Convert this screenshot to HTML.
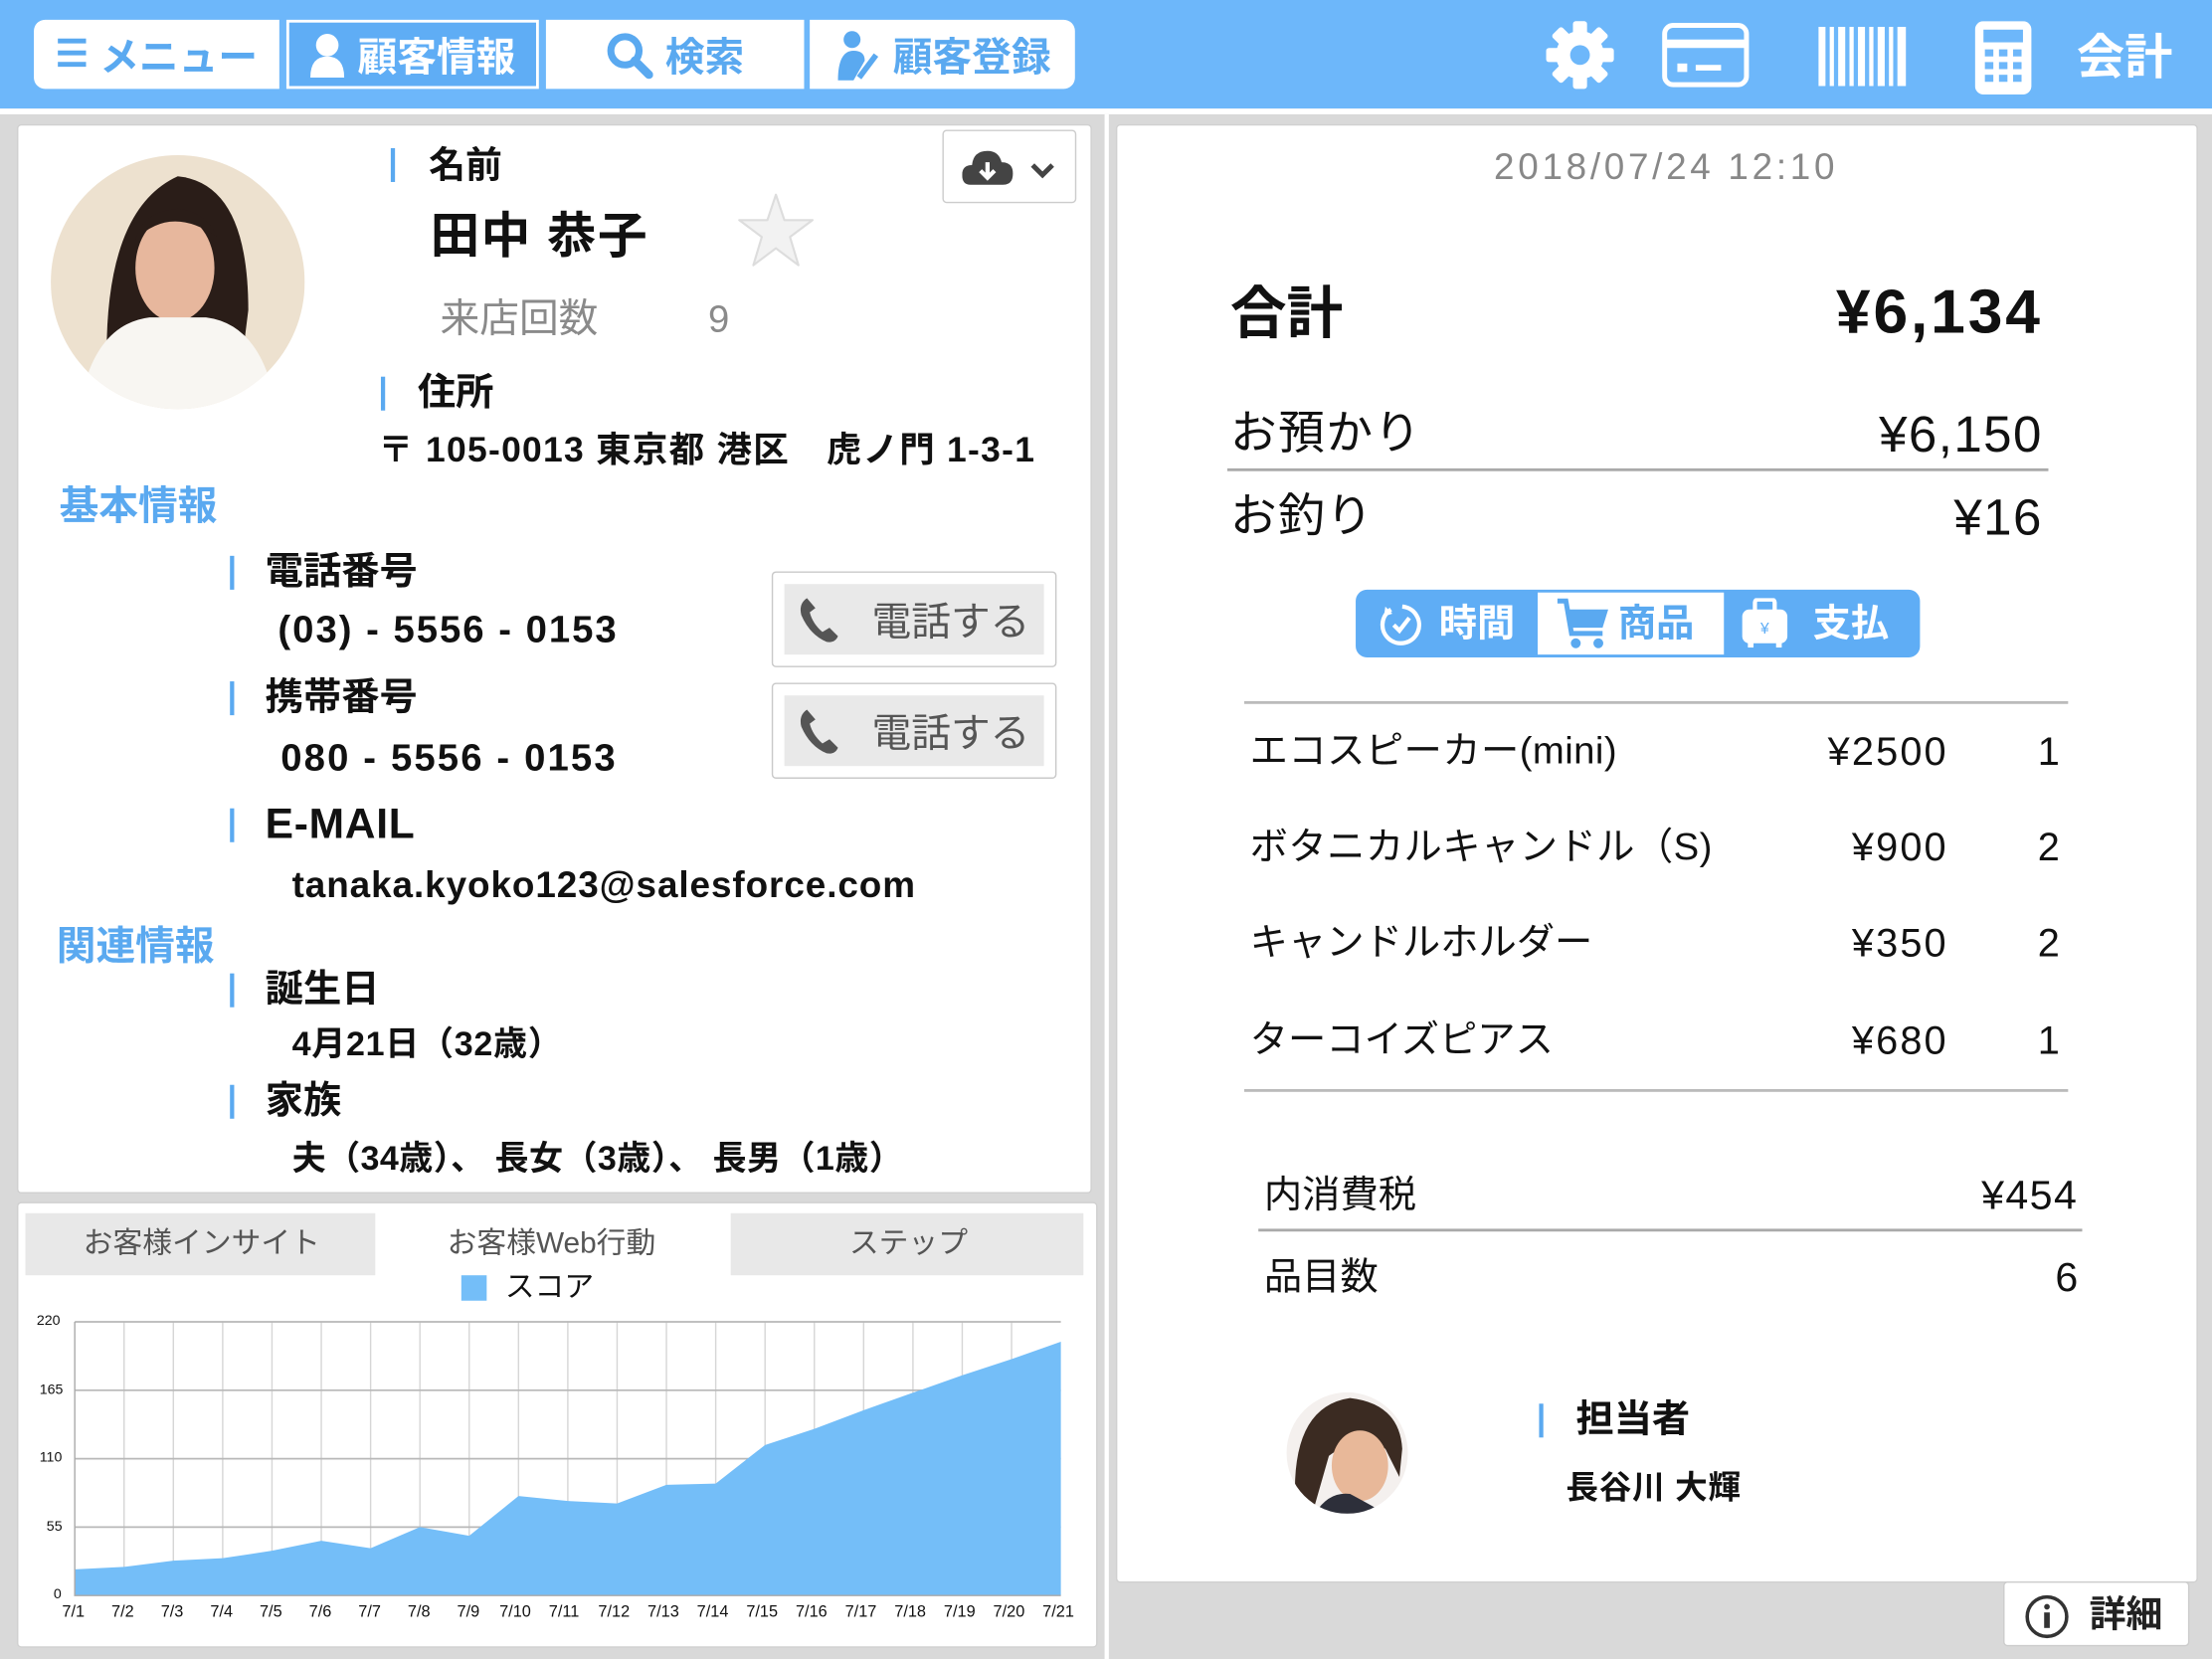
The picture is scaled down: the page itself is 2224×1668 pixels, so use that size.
<!DOCTYPE html>
<html><head><meta charset="utf-8">
<style>
*{margin:0;padding:0;box-sizing:border-box}
html,body{width:2224px;height:1668px;overflow:hidden;background:#d9d9d9}
#w{position:absolute;left:0;top:0;width:1568px;height:1176px;transform:scale(1.41837);transform-origin:0 0;font-family:"Liberation Sans","Noto Sans CJK JP",sans-serif;color:#111}
.a{position:absolute}
.t{position:absolute;line-height:1;white-space:nowrap}
.b{font-weight:bold}
.bar{position:absolute;width:3px;background:#5aa9f0}
.nav{position:absolute;top:14px;height:49px;background:#fff;color:#5aa9f0;font-weight:bold;font-size:28px;display:flex;align-items:center;justify-content:center;gap:8px}
.btn{position:absolute;left:547px;width:202px;height:68px;border:1px solid #c9c9c9;border-radius:3px;background:#fff}
.btn div{position:absolute;left:8px;top:8px;right:8px;bottom:8px;background:#e9e9e9;color:#555;font-size:28px;display:flex;align-items:center;justify-content:center;gap:22px}
.r{position:absolute;text-align:right;line-height:1;white-space:nowrap}
</style></head><body><div id="w">
<div class="a" style="left:0;top:0;width:1568px;height:77px;background:#6db7fa"></div>
<div class="a" style="left:0;top:77px;width:1568px;height:4px;background:#fff"></div>
<div class="nav" style="left:24px;width:174px;border-radius:8px 0 0 8px"><span style="font-size:26px">☰</span>メニュー</div>
<div class="nav" style="left:203px;width:179px;background:#5fadf5;color:#fff;border:2px solid #fff">
<svg width="26" height="32" viewBox="0 0 26 32"><circle cx="13" cy="9" r="8" fill="#fff"/><path d="M1 32 Q1 17 13 17 Q25 17 25 32Z" fill="#fff"/></svg>顧客情報</div>
<div class="nav" style="left:387px;width:183px"><svg width="34" height="34" viewBox="0 0 34 34"><circle cx="14" cy="14" r="10" fill="none" stroke="#5aa9f0" stroke-width="5"/><path d="M21 21 L31 31" stroke="#5aa9f0" stroke-width="6" stroke-linecap="round"/></svg>検索</div>
<div class="nav" style="left:574px;width:188px;border-radius:0 8px 8px 0"><svg width="34" height="36" viewBox="0 0 34 36"><circle cx="13" cy="7" r="6" fill="#5aa9f0"/><path d="M3 36 Q3 15 14 15 Q22 15 22 22 L14 36Z" fill="#5aa9f0"/><path d="M18 34 L30 18" stroke="#5aa9f0" stroke-width="4"/></svg>顧客登録</div>
<svg class="a" style="left:1094px;top:13px" width="52" height="52" viewBox="0 0 52 52"><g fill="#fff"><circle cx="26" cy="26" r="17"/><g id="tt"><rect x="21" y="2" width="10" height="12" rx="2"/><rect x="21" y="38" width="10" height="12" rx="2"/></g><use href="#tt" transform="rotate(45 26 26)"/><use href="#tt" transform="rotate(90 26 26)"/><use href="#tt" transform="rotate(135 26 26)"/></g><circle cx="26" cy="26" r="7" fill="#6db7fa"/></svg>
<svg class="a" style="left:1178px;top:16px" width="62" height="46" viewBox="0 0 62 46"><rect x="2" y="2" width="58" height="42" rx="6" fill="none" stroke="#fff" stroke-width="3.5"/><rect x="2" y="12" width="58" height="6" fill="#fff"/><rect x="11" y="29" width="7" height="6" fill="#fff"/><rect x="24" y="30" width="18" height="4" fill="#fff"/></svg>
<svg class="a" style="left:1289px;top:19px" width="64" height="42" viewBox="0 0 64 42"><g fill="#fff"><rect x="0" width="5" height="42"/><rect x="8" width="3" height="42"/><rect x="14" width="5" height="42"/><rect x="22" width="3" height="42"/><rect x="28" width="5" height="42"/><rect x="36" width="3" height="42"/><rect x="42" width="5" height="42"/><rect x="50" width="3" height="42"/><rect x="56" width="6" height="42"/></g></svg>
<svg class="a" style="left:1400px;top:15px" width="40" height="52" viewBox="0 0 40 52"><rect x="0" y="0" width="40" height="52" rx="6" fill="#fff"/><rect x="6" y="6" width="28" height="9" fill="#6db7fa"/><g fill="#6db7fa"><rect x="7" y="20" width="6" height="5"/><rect x="17" y="20" width="6" height="5"/><rect x="27" y="20" width="6" height="5"/><rect x="7" y="29" width="6" height="5"/><rect x="17" y="29" width="6" height="5"/><rect x="27" y="29" width="6" height="5"/><rect x="7" y="38" width="6" height="5"/><rect x="17" y="38" width="6" height="5"/><rect x="27" y="38" width="6" height="5"/></g></svg>
<div class="t b" style="left:1472px;top:24px;font-size:34px;color:#fff">会計</div>

<div class="a" style="left:783px;top:81px;width:3px;height:1095px;background:#fff"></div>
<div class="a" style="left:12px;top:88px;width:762px;height:758px;background:#fff;border:1px solid #d0d0d0;border-radius:3px"></div>
<svg class="a" style="left:36px;top:110px" width="180" height="180" viewBox="0 0 180 180"><defs><clipPath id="c1"><circle cx="90" cy="90" r="90"/></clipPath></defs><g clip-path="url(#c1)"><rect width="180" height="180" fill="#ede1cf"/><path d="M40 160 Q35 40 90 15 Q140 20 140 110 L135 150 Z" fill="#2a1d18"/><ellipse cx="88" cy="80" rx="28" ry="38" fill="#e7b79d"/><path d="M20 180 Q30 120 70 115 L110 115 Q150 120 160 180Z" fill="#f8f6f2"/><path d="M60 60 Q85 35 118 58 Q110 40 90 38 Q65 40 60 60Z" fill="#2a1d18"/></g></svg>
<div class="bar" style="left:277px;top:105px;height:24px"></div>
<div class="t b" style="left:304px;top:104px;font-size:26px">名前</div>
<div class="t b" style="left:305px;top:150px;font-size:35px;letter-spacing:1px">田中 恭子</div>
<svg class="a" style="left:522px;top:136px" width="56" height="54" viewBox="0 0 56 54"><path d="M28 2 L34 20 L54 20 L38 32 L44 52 L28 40 L12 52 L18 32 L2 20 L22 20Z" fill="#f2f2f2" stroke="#ddd" stroke-width="1.5" stroke-linejoin="round"/></svg>
<div class="t" style="left:312px;top:212px;font-size:28px;color:#8a8a8a">来店回数</div>
<div class="t" style="left:502px;top:213px;font-size:27px;color:#8a8a8a">9</div>
<div class="a" style="left:668px;top:92px;width:95px;height:52px;border:1px solid #ccc;border-radius:3px;background:#fff"></div>
<svg class="a" style="left:682px;top:103px" width="74" height="30" viewBox="0 0 74 30"><path d="M6 28 Q0 28 0 21 Q0 14 7 14 Q8 4 18 4 Q26 4 28 12 Q36 12 36 20 Q36 28 29 28Z" fill="#444"/><path d="M18 12 L18 22 M13 18 L18 23 L23 18" stroke="#fff" stroke-width="3" fill="none"/><path d="M50 14 L57 21 L64 14" stroke="#444" stroke-width="3.5" fill="none"/></svg>
<div class="bar" style="left:270px;top:267px;height:24px"></div>
<div class="t b" style="left:296px;top:265px;font-size:27px">住所</div>
<div class="t b" style="left:268px;top:307px;font-size:25px;letter-spacing:0.9px">〒 105-0013 東京都 港区　虎ノ門 1-3-1</div>
<div class="t b" style="left:42px;top:345px;font-size:28px;color:#5aa9f0">基本情報</div>
<div class="bar" style="left:163px;top:394px;height:24px"></div>
<div class="t b" style="left:188px;top:392px;font-size:27px">電話番号</div>
<div class="t b" style="left:197px;top:433px;font-size:27px;letter-spacing:1.4px">(03) - 5556 - 0153</div>
<div class="bar" style="left:163px;top:483px;height:24px"></div>
<div class="t b" style="left:188px;top:481px;font-size:27px">携帯番号</div>
<div class="t b" style="left:199px;top:524px;font-size:27px;letter-spacing:1.5px">080 - 5556 - 0153</div>
<div class="btn" style="top:405px"><div><svg width="30" height="34" viewBox="0 0 30 34"><path d="M6 2 Q0 6 2 14 Q8 28 20 33 Q26 34 28 29 L22 23 L17 26 Q10 20 8 12 L12 9 Z" fill="#555"/></svg>電話する</div></div>
<div class="btn" style="top:484px"><div><svg width="30" height="34" viewBox="0 0 30 34"><path d="M6 2 Q0 6 2 14 Q8 28 20 33 Q26 34 28 29 L22 23 L17 26 Q10 20 8 12 L12 9 Z" fill="#555"/></svg>電話する</div></div>
<div class="bar" style="left:163px;top:573px;height:24px"></div>
<div class="t b" style="left:188px;top:570px;font-size:30px;letter-spacing:0.5px">E-MAIL</div>
<div class="t b" style="left:207px;top:614px;font-size:26px;letter-spacing:0.65px">tanaka.kyoko123@salesforce.com</div>
<div class="t b" style="left:40px;top:657px;font-size:28px;color:#5aa9f0">関連情報</div>
<div class="bar" style="left:163px;top:690px;height:24px"></div>
<div class="t b" style="left:188px;top:688px;font-size:27px">誕生日</div>
<div class="t b" style="left:207px;top:729px;font-size:24px;letter-spacing:0.5px">4月21日（32歳）</div>
<div class="bar" style="left:163px;top:769px;height:24px"></div>
<div class="t b" style="left:188px;top:767px;font-size:27px">家族</div>
<div class="t b" style="left:207px;top:810px;font-size:24px;letter-spacing:0.3px">夫（34歳）、 長女（3歳）、 長男（1歳）</div>

<div class="a" style="left:12px;top:852px;width:766px;height:316px;background:#fff;border:1px solid #d0d0d0;border-radius:3px"></div>
<div class="a" style="left:18px;top:860px;width:248px;height:44px;background:#e8e8e8"></div>
<div class="a" style="left:518px;top:860px;width:250px;height:44px;background:#e8e8e8"></div>
<div class="t" style="left:59px;top:871px;font-size:21px;color:#555">お客様インサイト</div>
<div class="t" style="left:317px;top:871px;font-size:21px;color:#555">お客様Web行動</div>
<div class="t" style="left:602px;top:871px;font-size:21px;color:#555">ステップ</div>
<div class="a" style="left:327px;top:904px;width:18px;height:18px;background:#74bef8"></div>
<div class="t" style="left:358px;top:902px;font-size:21px;color:#111">スコア</div>
<svg class="a" style="left:53px;top:937px;overflow:visible" width="699" height="194" viewBox="0 0 20 220" preserveAspectRatio="none">
<path vector-effect="non-scaling-stroke" stroke="#d6d6d6" stroke-width="1" d="M1 0V220M2 0V220M3 0V220M4 0V220M5 0V220M6 0V220M7 0V220M8 0V220M9 0V220M10 0V220M11 0V220M12 0V220M13 0V220M14 0V220M15 0V220M16 0V220M17 0V220M18 0V220M19 0V220"/>
<path vector-effect="non-scaling-stroke" d="M0 0H20M0 55H20M0 110H20M0 165H20" stroke="#b8b8b8" stroke-width="1.2"/>
<polygon fill="#74bef8" points="0,220 0,199 1,197 2,192 3,190 4,184 5,176 6,182 7,165 8,172 9,140 10,144 11,146 12,131 13,130 14,99 15,86 16,71 17,57 18,43 19,30 20,16 20,220"/>
<path vector-effect="non-scaling-stroke" d="M0 0V220H20" stroke="#aaa" stroke-width="1" fill="none"/>
</svg>
<div class="t" style="left:26px;top:932px;font-size:10px">220</div>
<div class="t" style="left:28px;top:981px;font-size:10px">165</div>
<div class="t" style="left:28px;top:1029px;font-size:10px">110</div>
<div class="t" style="left:33px;top:1078px;font-size:10px">55</div>
<div class="t" style="left:38px;top:1126px;font-size:10px">0</div>
<div class="a" style="left:36px;top:1136px;width:750px;height:14px;font-size:11.5px;line-height:14px;white-space:nowrap">
<span class="a" style="left:8px">7/1</span><span class="a" style="left:43px">7/2</span><span class="a" style="left:78px">7/3</span><span class="a" style="left:113px">7/4</span><span class="a" style="left:148px">7/5</span><span class="a" style="left:183px">7/6</span><span class="a" style="left:218px">7/7</span><span class="a" style="left:253px">7/8</span><span class="a" style="left:288px">7/9</span><span class="a" style="left:318px">7/10</span><span class="a" style="left:353px">7/11</span><span class="a" style="left:388px">7/12</span><span class="a" style="left:423px">7/13</span><span class="a" style="left:458px">7/14</span><span class="a" style="left:493px">7/15</span><span class="a" style="left:528px">7/16</span><span class="a" style="left:563px">7/17</span><span class="a" style="left:598px">7/18</span><span class="a" style="left:633px">7/19</span><span class="a" style="left:668px">7/20</span><span class="a" style="left:703px">7/21</span></div>

<div class="a" style="left:791px;top:88px;width:767px;height:1034px;background:#fff;border:1px solid #d0d0d0;border-radius:3px"></div>
<div class="t" style="left:1059px;top:105px;font-size:26px;color:#888;letter-spacing:2.6px">2018/07/24 12:10</div>
<div class="t b" style="left:872px;top:203px;font-size:40px">合計</div>
<div class="r b" style="right:120px;top:200px;font-size:44px;letter-spacing:2px">¥6,134</div>
<div class="t" style="left:872px;top:290px;font-size:33px;letter-spacing:1px">お預かり</div>
<div class="r" style="right:120px;top:290px;font-size:36px;letter-spacing:1px">¥6,150</div>
<div class="a" style="left:870px;top:332px;width:582px;height:2px;background:#aaa"></div>
<div class="t" style="left:872px;top:349px;font-size:33px;letter-spacing:1px">お釣り</div>
<div class="r" style="right:120px;top:349px;font-size:36px;letter-spacing:1px">¥16</div>
<div class="a" style="left:961px;top:418px;width:400px;height:48px;background:#5fadf5;border-radius:8px"></div>
<div class="a" style="left:1090px;top:420px;width:132px;height:44px;background:#fff"></div>
<svg class="a" style="left:978px;top:427px" width="32" height="32" viewBox="0 0 32 32"><path d="M8 5 A13 13 0 1 0 16 3" fill="none" stroke="#fff" stroke-width="3"/><path d="M4 3 L9 8 L3 10" fill="#fff"/><path d="M10 16 L14 20 L21 11" fill="none" stroke="#fff" stroke-width="3"/></svg>
<div class="t b" style="left:1020px;top:429px;font-size:27px;color:#fff">時間</div>
<svg class="a" style="left:1102px;top:423px" width="40" height="38" viewBox="0 0 40 38"><path d="M2 3 H8 L12 26 H34" fill="none" stroke="#5aa9f0" stroke-width="3.5"/><path d="M10 9 H38 L34 22 H12Z" fill="#5aa9f0"/><circle cx="15" cy="33" r="3.5" fill="#5aa9f0"/><circle cx="31" cy="33" r="3.5" fill="#5aa9f0"/></svg>
<div class="t b" style="left:1147px;top:429px;font-size:27px;color:#5aa9f0">商品</div>
<svg class="a" style="left:1233px;top:424px" width="36" height="36" viewBox="0 0 36 36"><rect x="11" y="1" width="14" height="9" rx="2" fill="none" stroke="#fff" stroke-width="3"/><rect x="2" y="8" width="32" height="24" rx="5" fill="#fff"/><rect x="6" y="30" width="4" height="5" fill="#fff"/><rect x="26" y="30" width="4" height="5" fill="#fff"/><text x="18" y="25" font-size="11" fill="#5fadf5" text-anchor="middle" font-family="Liberation Sans">¥</text></svg>
<div class="t b" style="left:1285px;top:429px;font-size:27px;color:#fff">支払</div>
<div class="a" style="left:882px;top:497px;width:584px;height:2px;background:#bbb"></div>
<div class="t" style="left:886px;top:519px;font-size:27px;letter-spacing:0.3px">エコスピーカー(mini)</div>
<div class="r" style="right:187px;top:519px;font-size:28px;letter-spacing:1.5px">¥2500</div><div class="r" style="right:108px;top:519px;font-size:28px">1</div>
<div class="t" style="left:886px;top:587px;font-size:27px;letter-spacing:0.3px">ボタニカルキャンドル（S)</div>
<div class="r" style="right:187px;top:587px;font-size:28px;letter-spacing:1.5px">¥900</div><div class="r" style="right:108px;top:587px;font-size:28px">2</div>
<div class="t" style="left:886px;top:655px;font-size:27px">キャンドルホルダー</div>
<div class="r" style="right:187px;top:655px;font-size:28px;letter-spacing:1.5px">¥350</div><div class="r" style="right:108px;top:655px;font-size:28px">2</div>
<div class="t" style="left:886px;top:724px;font-size:27px">ターコイズピアス</div>
<div class="r" style="right:187px;top:724px;font-size:28px;letter-spacing:1.5px">¥680</div><div class="r" style="right:108px;top:724px;font-size:28px">1</div>
<div class="a" style="left:882px;top:772px;width:584px;height:2px;background:#bbb"></div>
<div class="t" style="left:896px;top:834px;font-size:27px">内消費税</div>
<div class="r" style="right:95px;top:834px;font-size:29px;letter-spacing:1px">¥454</div>
<div class="a" style="left:892px;top:871px;width:584px;height:2px;background:#aaa"></div>
<div class="t" style="left:896px;top:892px;font-size:27px">品目数</div>
<div class="r" style="right:95px;top:892px;font-size:29px">6</div>
<svg class="a" style="left:912px;top:987px" width="86" height="86" viewBox="0 0 86 86"><defs><clipPath id="c2"><circle cx="43" cy="43" r="43"/></clipPath></defs><g clip-path="url(#c2)"><rect width="86" height="86" fill="#f4f0ee"/><path d="M0 60 L20 86 L0 86Z" fill="#e07a8a"/><path d="M86 55 L86 86 L70 86Z" fill="#5aa9f0"/><path d="M6 75 Q4 10 45 4 Q80 8 82 40 L80 60 L70 40 Q50 30 30 45 L20 80Z" fill="#3b2b22"/><ellipse cx="52" cy="52" rx="20" ry="25" fill="#e8b899"/><path d="M20 86 Q30 70 45 72 Q60 80 70 86Z" fill="#2d2f3a"/></g></svg>
<div class="bar" style="left:1091px;top:995px;height:24px"></div>
<div class="t b" style="left:1117px;top:993px;font-size:27px">担当者</div>
<div class="t b" style="left:1110px;top:1043px;font-size:23px;letter-spacing:0.5px">長谷川 大輝</div>
<div class="a" style="left:1420px;top:1121px;width:132px;height:46px;background:#fff;border:1px solid #ccc;border-radius:3px"></div>
<svg class="a" style="left:1435px;top:1130px" width="32" height="32" viewBox="0 0 32 32"><circle cx="16" cy="16" r="14" fill="none" stroke="#333" stroke-width="2.5"/><circle cx="16" cy="9" r="2" fill="#333"/><rect x="14" y="13" width="4" height="11" fill="#333"/></svg>
<div class="t b" style="left:1481px;top:1131px;font-size:26px;color:#222">詳細</div>
</div></body></html>
